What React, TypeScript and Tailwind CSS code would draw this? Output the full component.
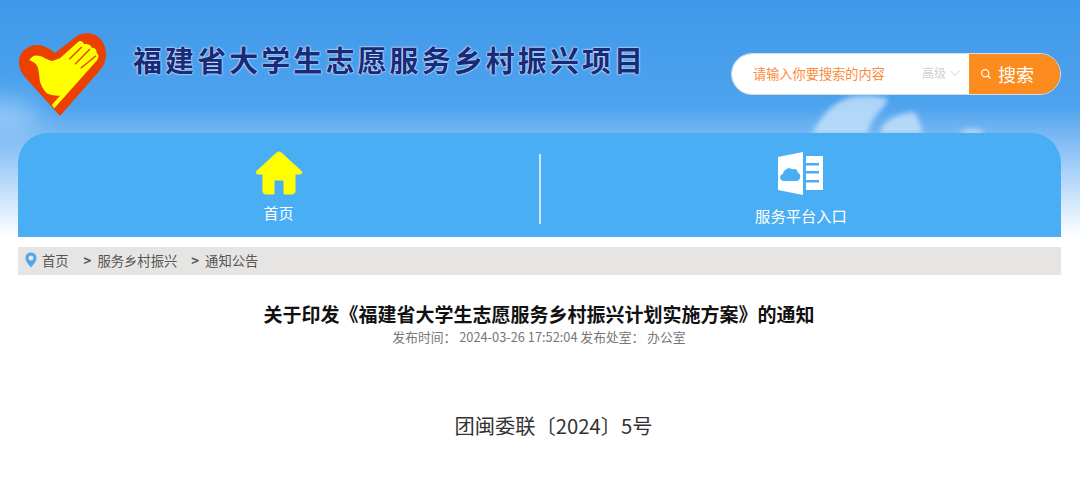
import React from 'react';

const cjk = { fontFamily: '"Microsoft YaHei", "Noto Sans CJK SC", "Liberation Sans", sans-serif' };

const crumbs = ['服务乡村振兴', '通知公告'];

const Logo = () => (
  <svg width="88" height="84" viewBox="0 0 88 84" className="shrink-0">
    <path d="M41 83 L5 43 C-3 33 -1 20 8 15 C17 9 28 13 36 20 L58 3 C66 -2 78 0 83 8 C89 17 88 28 82 36 Z" fill="#eb4000" />
    <path d="M10.300 27 C13 23 16 22 19 22.700 C24 23 28 27 33 28 L41 25.300 L59.300 8.700 C61 7.500 64 8 65 11.300 C68 10.500 72 11.500 72.700 14.700 C75 14.500 78 16 77.700 20.300 C79 21 80 22.500 79.300 24.300 L78.300 27 L35.300 75.300 L32.700 72 L41 62.700 C36 63 31 62 27.700 60.300 C24 56 22 52 21 48.700 C20 42 20 36 17.700 32 C15 29 12 28 10.300 27 Z" fill="#ffff00" />
    <path d="M50.300 26.300 L62.700 14 M56 31.300 L71 16 M61.700 35.300 L77 22.700" stroke="#eb4000" strokeWidth="1.400" fill="none" />
  </svg>
);

const Clouds = () => (
  <svg className="absolute inset-0 w-full h-full" viewBox="0 0 1080 237" preserveAspectRatio="none">
    <defs>
      <filter id="soft" x="-50%" y="-50%" width="200%" height="200%"><feGaussianBlur stdDeviation="2.500" /></filter>
      <filter id="softer" x="-100%" y="-100%" width="300%" height="300%"><feGaussianBlur stdDeviation="12" /></filter>
    </defs>
    <g filter="url(#soft)" fill="#cfe6fb" opacity="0.75">
      <path d="M812 134 C820 118 830 104 848 98 C858 94 886 96 888 100 C884 110 870 116 868 134 Z" />
      <path d="M880 134 C882 120 896 114 914 112 C920 120 922 128 922 134 Z" />
      <ellipse cx="972" cy="132" rx="12" ry="3" />
    </g>
    <g filter="url(#softer)" fill="#9ccdf7" opacity="0.8">
      <ellipse cx="0" cy="118" rx="40" ry="20" />
    </g>
  </svg>
);

const App: React.FC = () => {
  return (
    <div className="w-[1080px] h-[491px] bg-white overflow-hidden" style={cjk}>
      <div className="relative h-[237px] bg-gradient-to-b from-[#3f98ea] via-[#4ea3ee] via-45% to-white">
        <Clouds />
        <div className="relative h-[133px] pl-[19px] pr-[19px] flex items-start">
          <div className="mt-[33px]"><Logo /></div>
          <h1
            className="ml-[26px] mt-[41px] text-[29px] leading-[36px] font-bold tracking-[3.07px] text-[#182a78] whitespace-nowrap"
            style={{ textShadow: '0 0 2px #d7e7fb, 0 0 2px #d7e7fb, 0 0 1px #d7e7fb' }}
          >
            福建省大学生志愿服务乡村振兴项目
          </h1>
          <div className="ml-auto mt-[53px] flex w-[330px] h-[42px] rounded-[21px] overflow-hidden border border-[#d5dde6]">
            <div className="flex-1 bg-white flex items-center pl-[21px] pr-[8px]">
              <span className="text-[13.2px] text-[#fb8a3c]">请输入你要搜索的内容</span>
              <span className="ml-auto text-[12px] text-[#cfcfcf] mb-[2px]">高级</span>
              <svg width="12" height="12" viewBox="0 0 12 12" fill="none" stroke="#d2d2d2" strokeWidth="1" className="ml-[3px] mb-[2px]">
                <path d="M1.500 4 L6 8.500 L10.500 4" />
              </svg>
            </div>
            <div className="w-[91px] bg-[#fc8c1e] flex items-center pl-[11px] text-white">
              <svg width="12" height="12" viewBox="0 0 12 12" fill="none" stroke="#ffffff" strokeWidth="1.200">
                <circle cx="5.200" cy="5.200" r="3.600" />
                <path d="M8 8 L10.500 10.500" />
              </svg>
              <span className="ml-[6px] text-[18px]">搜索</span>
            </div>
          </div>
        </div>
        <nav className="relative ml-[18px] mr-[19px] h-[104px] bg-[#4aaef5] rounded-t-[30px] flex items-stretch">
          <a className="w-[521px] flex flex-col items-center pt-[18px] text-white">
            <svg width="48" height="44" viewBox="0 0 48 44" fill="#ffff00" stroke="#ffff00" strokeWidth="1" strokeLinejoin="round">
              <path d="M24 1 C25 1 26 1.500 27 2.500 L46 20 C47.500 21.500 47 23 45 23 L40 23 L40 40 C40 42 39 43 37 43 L29 43 L29 29 L19 29 L19 43 L11 43 C9 43 8 42 8 40 L8 23 L3 23 C1 23 0.500 21.500 2 20 L21 2.500 C22 1.500 23 1 24 1 Z" />
            </svg>
            <span className="mt-[8px] text-[15px] leading-[20px]">首页</span>
          </a>
          <div className="w-[2px] h-[70px] mt-[21px] bg-[#cfe6fa]" />
          <a className="flex-1 flex flex-col items-center pt-[19px] text-white">
            <svg width="46" height="44" viewBox="0 0 46 44" fill="#ffffff">
              <path d="M0 5 L25 0 L25 43 L0 38 Z" />
              <path d="M28 4 L44 4 C44.600 4 45 4.400 45 5 L45 37 C45 37.600 44.600 38 44 38 L28 38 Z" />
              <path d="M28 11 L41 11 L41 13.500 L28 13.500 Z M28 19 L41 19 L41 21.500 L28 21.500 Z M28 28 L41 28 L41 30.500 L28 30.500 Z" fill="#4aaef5" />
              <path d="M6 29 C1.500 29 0.500 23 5 22 C5.500 17.500 11 14.500 14.500 17.500 C17 16 20 18 20 21 C23.500 21.500 23 29 18.500 29 Z" fill="#4aaef5" />
            </svg>
            <span className="mt-[9px] text-[15.3px] leading-[20px]">服务平台入口</span>
          </a>
        </nav>
      </div>

      <div className="ml-[18px] mr-[19px] mt-[10px] h-[28px] bg-[#e6e5e3] flex items-center pl-[7px] text-[13.3px] text-[#555555]">
        <svg width="12" height="16" viewBox="0 0 12 16" className="mb-[2px]">
          <path d="M6 0.500 C2.800 0.500 0.500 3 0.500 6 C0.500 9.500 4 13 6 15.500 C8 13 11.500 9.500 11.500 6 C11.500 3 9.200 0.500 6 0.500 Z M6 3.500 A2.500 2.500 0 1 1 6 8.500 A2.500 2.500 0 1 1 6 3.500 Z" fill="#4ea6ee" fillRule="evenodd" />
        </svg>
        <span className="ml-[5px]">首页</span>
        {crumbs.map((c, i) => (
          <React.Fragment key={c}>
            <span className={i === 0 ? 'ml-[15px] font-bold' : 'ml-[14px] font-bold'}>&gt;</span>
            <span className="ml-[6px]">{c}</span>
          </React.Fragment>
        ))}
      </div>

      <div className="text-center">
        <h2 className="mt-[27px] text-[19px] leading-[24px] font-bold text-[#111111] ml-[-2px]">
          关于印发《福建省大学生志愿服务乡村振兴计划实施方案》的通知
        </h2>
        <p className="mt-[2px] text-[12.8px] leading-[18px] text-[#777777] ml-[-2px]">
          发布时间： 2024-03-26 17:52:04 发布处室： 办公室
        </p>
        <p className="mt-[64px] text-[20.3px] leading-[30px] text-[#333333] ml-[27px]">团闽委联〔2024〕5号</p>
      </div>
    </div>
  );
};

export default App;
